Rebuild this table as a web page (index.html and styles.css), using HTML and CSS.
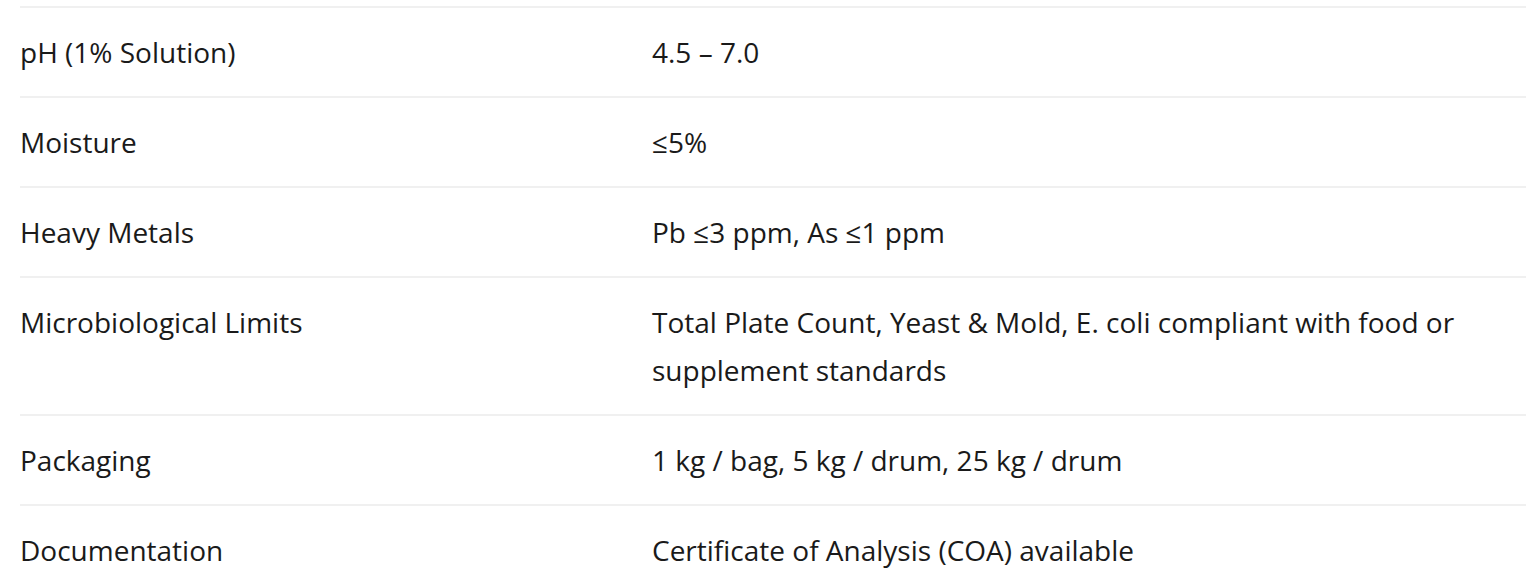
FILE: index.html
```html
<!DOCTYPE html>
<html lang="en">
<head>
<meta charset="utf-8">
<title>Specifications</title>
<link rel="stylesheet" href="styles.css">
</head>
<body>
<div class="spec-wrap">
  <table class="spec-table">
    <tbody>
      <tr><td class="spec-name">pH (1% Solution)</td><td class="spec-value">4.5 – 7.0</td></tr>
      <tr><td class="spec-name">Moisture</td><td class="spec-value">≤5%</td></tr>
      <tr><td class="spec-name">Heavy Metals</td><td class="spec-value">Pb ≤3 ppm, As ≤1 ppm</td></tr>
      <tr><td class="spec-name">Microbiological Limits</td><td class="spec-value">Total Plate Count, Yeast &amp; Mold, E. coli compliant with food or supplement standards</td></tr>
      <tr><td class="spec-name">Packaging</td><td class="spec-value">1 kg / bag, 5 kg / drum, 25 kg / drum</td></tr>
      <tr><td class="spec-name">Documentation</td><td class="spec-value">Certificate of Analysis (COA) available</td></tr>
    </tbody>
  </table>
</div>
</body>
</html>
```
FILE: styles.css
```css
html, body {
  margin: 0;
  padding: 0;
  background: #ffffff;
}
body {
  font-family: "Open Sans", "Noto Sans", "Liberation Sans", sans-serif;
  color: #1a1a1a;
  overflow: hidden;
}
.spec-wrap {
  padding: 6px 0 0 20px;
}
.spec-table {
  width: 1506px;
  border-collapse: collapse;
  table-layout: fixed;
}
.spec-table td {
  border-top: 2px solid #f0f0f0;
  padding: 20px 0;
  font-size: 28px;
  line-height: 48px;
  vertical-align: top;
  text-align: left;
}
.spec-name {
  width: 632px;
}
.spec-value {
  padding-right: 20px;
}
```
